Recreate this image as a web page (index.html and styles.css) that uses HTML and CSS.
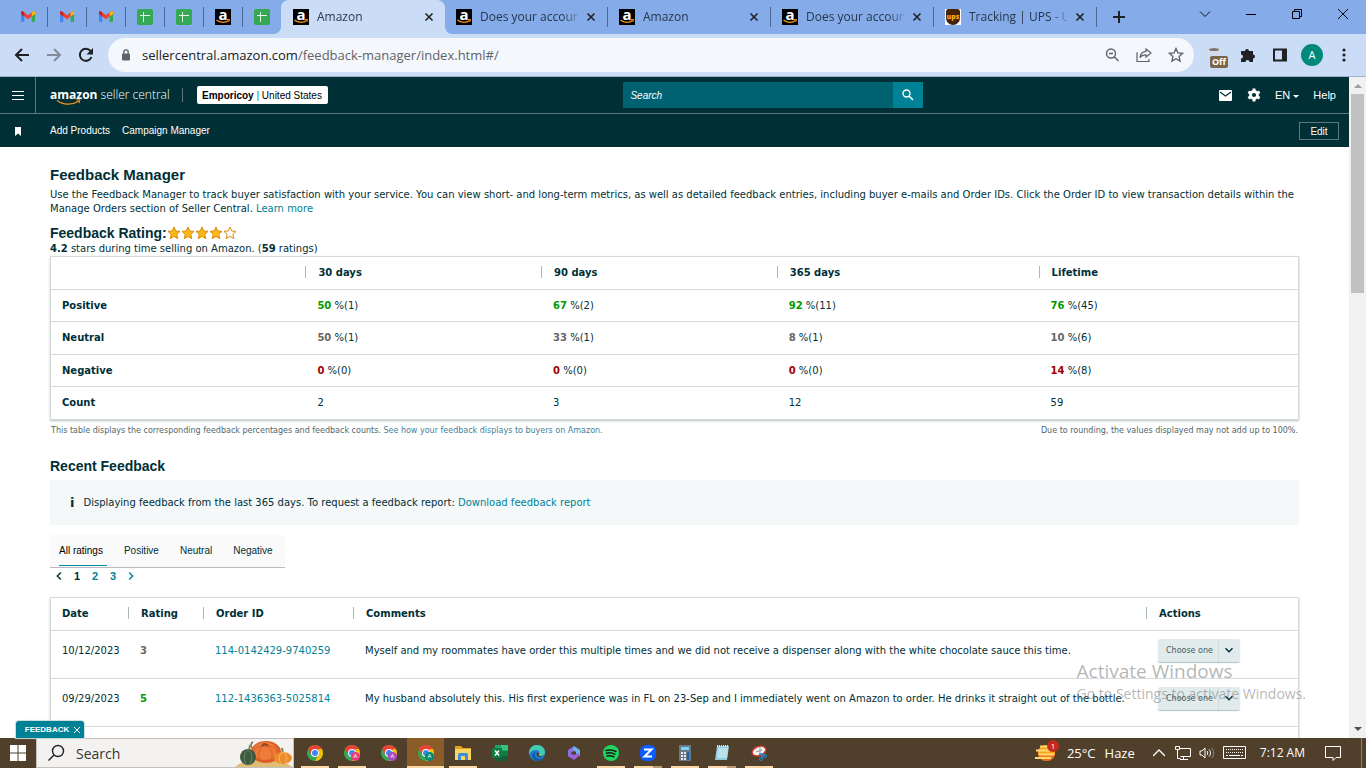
FILE: index.html
```html
<!DOCTYPE html>
<html lang="en">
<head>
    <meta charset="UTF-8">
    <meta name="viewport" content="width=device-width, initial-scale=1.0">
    <title>Amazon</title>
    <link rel="stylesheet" href="styles.css">
</head>
<body>
    <!-- shared icons -->
    <svg class="sprite" aria-hidden="true">
        <symbol id="gmail" viewBox="0 0 16 16">
            <path fill="#4285f4" d="M1 5v7.2c0 .5.3.8.8.8H4.300V6.600z"/>
            <path fill="#34a853" d="M15 5v7.200c0 .5-.3.800-.8.800h-2.500V6.600z"/>
            <path fill="#ea4335" d="M1 3.500C1 2.300 2.400 2 3.300 2.700L8 6.300l4.700-3.600C13.600 2 15 2.300 15 3.500V5L8 10.300 1 5z"/>
            <path fill="#c5221f" d="M1 3.500C1 2.300 2.400 2 3.300 2.700l1 .8v4L1 5z"/>
            <path fill="#fbbc04" d="M15 3.500c0-1.200-1.400-1.500-2.300-.8l-1 .8v4L15 5z"/>
        </symbol>
        <symbol id="sheets" viewBox="0 0 16 16">
            <rect width="16" height="16" rx="2" fill="#34a853"/>
            <path d="M6.500 3v10M3 6.500h10" stroke="#e6f5ea" stroke-width="1" fill="none"/>
        </symbol>
        <symbol id="smile" viewBox="0 0 16 5">
            <path d="M1.500 1C5 4 10.500 4 13.500 1.600" stroke="#f7941d" stroke-width="1.300" fill="none"/>
            <path d="M12 .7l2.600-.2-.8 2.400" stroke="#f7941d" fill="none"/>
        </symbol>
        <symbol id="close" viewBox="0 0 10 10">
            <path d="M1.500 1.500l7 7M8.500 1.500l-7 7" stroke="currentColor" stroke-width="1.600" fill="none"/>
        </symbol>
        <symbol id="star" viewBox="0 0 14 14">
            <path d="M7 1l1.800 4 4.200.400-3.200 2.900 1 4.400L7 10.400l-3.800 2.300 1-4.400L1 5.400 5.200 5z"/>
        </symbol>
        <symbol id="chevron" viewBox="0 0 10 10">
            <path d="M1.500 3.200L5 6.700l3.500-3.500" stroke="currentColor" stroke-width="1.400" fill="none"/>
        </symbol>
        <symbol id="chrome" viewBox="0 0 16 16">
            <circle cx="8" cy="8" r="8" fill="#34a853"/>
            <path fill="#ea4335" d="M1.100 4A8 8 0 0 1 14.900 4L8 8H4z"/>
            <path fill="#ea4335" d="M1.100 4l3.500 6L8 4.400z"/>
            <path fill="#fbbc04" d="M14.900 4A8 8 0 0 1 8 16l3.500-6V4z"/>
            <circle cx="8" cy="8" r="4" fill="#fff"/>
            <circle cx="8" cy="8" r="3" fill="#4285f4"/>
        </symbol>
    </svg>

    <!-- browser tabs -->
    <div class="tab-strip">
        <div class="pinned"><svg><use href="#gmail"/></svg></div>
        <div class="pinned"><svg><use href="#gmail"/></svg></div>
        <div class="pinned"><svg><use href="#gmail"/></svg></div>
        <div class="pinned"><svg><use href="#sheets"/></svg></div>
        <div class="pinned"><svg><use href="#sheets"/></svg></div>
        <div class="pinned"><span class="favicon">a<svg><use href="#smile"/></svg></span></div>
        <div class="pinned last"><svg><use href="#sheets"/></svg></div>
        <div class="tab active">
            <span class="favicon">a<svg><use href="#smile"/></svg></span>
            <span class="tab-title">Amazon</span>
            <button class="tab-close" aria-label="Close tab"><svg><use href="#close"/></svg></button>
        </div>
        <div class="tab">
            <span class="favicon">a<svg><use href="#smile"/></svg></span>
            <span class="tab-title">Does your accoun</span>
            <button class="tab-close" aria-label="Close tab"><svg><use href="#close"/></svg></button>
        </div>
        <div class="tab">
            <span class="favicon">a<svg><use href="#smile"/></svg></span>
            <span class="tab-title">Amazon</span>
            <button class="tab-close" aria-label="Close tab"><svg><use href="#close"/></svg></button>
        </div>
        <div class="tab">
            <span class="favicon">a<svg><use href="#smile"/></svg></span>
            <span class="tab-title">Does your accoun</span>
            <button class="tab-close" aria-label="Close tab"><svg><use href="#close"/></svg></button>
        </div>
        <div class="tab">
            <span class="favicon ups"><b>ups</b></span>
            <span class="tab-title">Tracking | UPS - U</span>
            <button class="tab-close" aria-label="Close tab"><svg><use href="#close"/></svg></button>
        </div>
        <button class="new-tab" aria-label="New tab"><svg viewBox="0 0 12 12"><path d="M6 0v12M0 6h12" stroke="#202124" stroke-width="2"/></svg></button>
        <div class="window-controls">
            <button aria-label="Search tabs"><svg viewBox="0 0 12 12"><path d="M1 3.500l5 5 5-5" stroke="#111" fill="none"/></svg></button>
            <button aria-label="Minimize"><svg viewBox="0 0 12 12"><path d="M1 6.500h10" stroke="#000"/></svg></button>
            <button aria-label="Restore"><svg viewBox="0 0 12 12"><path d="M1.500 3.500h7v7h-7zM3.500 3.500v-2h7v7h-2" stroke="#000" fill="none"/></svg></button>
            <button aria-label="Close"><svg viewBox="0 0 12 12"><path d="M1 1l10 10M11 1L1 11" stroke="#000" fill="none"/></svg></button>
        </div>
    </div>

    <!-- address bar -->
    <div class="toolbar">
        <button class="nav-button" aria-label="Back"><svg viewBox="0 0 16 16"><path d="M15 8H2M8 2L2 8l6 6" stroke="#202124" stroke-width="2" fill="none"/></svg></button>
        <button class="nav-button" aria-label="Forward"><svg viewBox="0 0 16 16"><path d="M1 8h13M8 2l6 6-6 6" stroke="#838b99" stroke-width="2" fill="none"/></svg></button>
        <button class="nav-button" aria-label="Reload"><svg viewBox="0 0 16 16"><path d="M13.500 10A6 6 0 1 1 12.500 4" stroke="#202124" stroke-width="2" fill="none"/><path d="M15 1v6.500H8.500z" fill="#202124"/></svg></button>
        <div class="address">
            <svg class="lock" viewBox="0 0 10 12"><rect x="1" y="4.500" width="8" height="7" rx="1" fill="#5f6368"/><path d="M2.800 5V3a2.200 2.200 0 0 1 4.400 0v2" stroke="#5f6368" stroke-width="1.300" fill="none"/></svg>
            <span class="url"><span class="host">sellercentral.amazon.com</span>/feedback-manager/index.html#/</span>
            <svg class="address-icon" viewBox="0 0 16 16"><circle cx="7" cy="6.500" r="4.500" stroke="#5f6368" stroke-width="1.400" fill="none"/><path d="M10.300 9.800L14.500 14M5 6.500h4" stroke="#5f6368" stroke-width="1.400"/></svg>
            <svg class="address-icon" viewBox="0 0 16 16"><path d="M2 6H1v8.500h12V12" stroke="#5f6368" stroke-width="1.200" fill="none"/><path d="M10 2l5 4-5 4V7.800C7 7.800 5 9 4 10.800 4.300 7.500 6 4.800 10 4.400z" stroke="#5f6368" stroke-width="1.200" fill="none"/></svg>
            <svg class="address-icon" viewBox="0 0 16 16"><path d="M8 1.500l1.900 4.300 4.700.500-3.500 3.200 1 4.600L8 11.700l-4.100 2.400 1-4.600L1.400 6.300l4.700-.5z" stroke="#5f6368" stroke-width="1.300" fill="none"/></svg>
        </div>
        <div class="extensions">
            <span class="extension-off">
                <svg viewBox="0 0 16 16"><ellipse cx="8" cy="4" rx="7" ry="3" fill="#d9dbde"/><ellipse cx="8" cy="3.500" rx="5" ry="1.600" fill="#777"/><path d="M2 6v5M13 6v4" stroke="#d9dbde" stroke-width="2"/></svg>
                <b>Off</b>
            </span>
            <svg class="extension-icon" viewBox="0 0 16 16"><path fill="#202124" d="M1 4h4a2 2 0 1 1 4 0h4v3.500a2 2 0 1 1 0 4V15H9.500a2 2 0 0 0-4 0H1v-3.500a2 2 0 0 0 0-4z"/></svg>
            <svg class="extension-icon" viewBox="0 0 16 16"><path d="M2 2.500h12v11H2z" stroke="#202124" stroke-width="2" fill="none"/><path d="M10 2h5v12h-5z" fill="#202124"/></svg>
            <span class="avatar">A</span>
            <svg class="dots" viewBox="0 0 4 16"><circle cx="2" cy="3" r="1.600"/><circle cx="2" cy="8" r="1.600"/><circle cx="2" cy="13" r="1.600"/></svg>
        </div>
    </div>

    <div class="viewport">
        <div class="page">
            <header>
                <div class="header-top">
                    <button class="menu-button" aria-label="Menu"><svg viewBox="0 0 12 10"><path d="M0 1.500h12M0 5.500h12M0 9.500h12" stroke="#fff"/></svg></button>
                    <a class="logo" href="#"><b>amazon</b> seller central<svg viewBox="0 0 26 7"><path d="M1 1.500c6 4.500 15 5 22 .500" stroke="#f7941d" stroke-width="1.400" fill="none"/><path d="M20 1l4-.3-1 3.600" stroke="#f7941d" fill="none"/></svg></a>
                    <button class="store"><span><b>Emporicoy</b> <i>|</i> United States</span></button>
                    <form class="search">
                        <input type="text" placeholder="Search" aria-label="Search">
                        <button type="button" aria-label="Go"><svg viewBox="0 0 12 12"><circle cx="4.500" cy="4.500" r="3.500" stroke="#fff" stroke-width="1.400" fill="none"/><path d="M7 7l4 4" stroke="#fff" stroke-width="1.600"/></svg></button>
                    </form>
                    <nav class="header-links">
                        <a href="#" aria-label="Messages"><svg viewBox="0 0 14 14"><rect x="0" y="2" width="13" height="11" rx="1" fill="#fff"/><path d="M1 4l5.500 4L12 4" stroke="#002f36" stroke-width="1.200" fill="none"/></svg></a>
                        <a href="#" aria-label="Settings"><svg viewBox="0 0 14 14"><circle cx="7" cy="7" r="3.500" stroke="#fff" stroke-width="2.800" fill="none"/><path d="M7 .5v2.500M7 11v2.500M1.400 3.800l2 1.200M10.600 9l2 1.200M1.400 10.200l2-1.200M10.600 5l2-1.200" stroke="#fff" stroke-width="3"/></svg></a>
                        <a href="#">EN <span class="caret"></span></a>
                        <a href="#">Help</a>
                    </nav>
                </div>
                <nav class="favorites">
                    <svg class="bookmark" viewBox="0 0 6 9"><path d="M0 0h6v9L3 6.500 0 9z" fill="#fff"/></svg>
                    <a href="#">Add Products</a>
                    <a href="#">Campaign Manager</a>
                    <button class="edit">Edit</button>
                </nav>
            </header>

            <main>
                <h1>Feedback Manager</h1>
                <p>Use the Feedback Manager to track buyer satisfaction with your service. You can view short- and long-term metrics, as well as detailed feedback entries, including buyer e-mails and Order IDs. Click the Order ID to view transaction details within the Manage Orders section of Seller Central. <a href="#">Learn more</a></p>

                <div class="rating">
                    <h2>Feedback Rating:</h2>
                    <span class="stars">
                        <svg><use href="#star"/></svg><svg><use href="#star"/></svg><svg><use href="#star"/></svg><svg><use href="#star"/></svg><svg class="empty"><use href="#star"/></svg>
                    </span>
                </div>
                <p><b>4.2</b> stars during time selling on Amazon. (<b>59</b> ratings)</p>

                <table class="summary">
                    <thead>
                        <tr><td></td><th>30 days</th><th>90 days</th><th>365 days</th><th>Lifetime</th></tr>
                    </thead>
                    <tbody>
                        <tr class="positive"><th>Positive</th><td><b>50</b> %(1)</td><td><b>67</b> %(2)</td><td><b>92</b> %(11)</td><td><b>76</b> %(45)</td></tr>
                        <tr class="neutral"><th>Neutral</th><td><b>50</b> %(1)</td><td><b>33</b> %(1)</td><td><b>8</b> %(1)</td><td><b>10</b> %(6)</td></tr>
                        <tr class="negative"><th>Negative</th><td><b>0</b> %(0)</td><td><b>0</b> %(0)</td><td><b>0</b> %(0)</td><td><b>14</b> %(8)</td></tr>
                        <tr><th>Count</th><td>2</td><td>3</td><td>12</td><td>59</td></tr>
                    </tbody>
                </table>
                <div class="notes">
                    <span>This table displays the corresponding feedback percentages and feedback counts. <a href="#">See how your feedback displays to buyers on Amazon.</a></span>
                    <span>Due to rounding, the values displayed may not add up to 100%.</span>
                </div>

                <h2 class="recent-title">Recent Feedback</h2>
                <div class="info">
                    <b class="info-icon">i</b>
                    <span>Displaying feedback from the last 365 days. To request a feedback report: <a href="#">Download feedback report</a></span>
                </div>

                <div class="filters">
                    <button class="selected">All ratings</button>
                    <button>Positive</button>
                    <button>Neutral</button>
                    <button>Negative</button>
                </div>
                <nav class="pages">
                    <a class="current" href="#" aria-label="Previous"><svg class="left"><use href="#chevron"/></svg></a>
                    <a class="current" href="#">1</a>
                    <a href="#">2</a>
                    <a href="#">3</a>
                    <a href="#" aria-label="Next"><svg class="right"><use href="#chevron"/></svg></a>
                </nav>

                <table class="feedback">
                    <thead>
                        <tr><th class="date">Date</th><th class="score">Rating</th><th class="order">Order ID</th><th>Comments</th><th class="actions">Actions</th></tr>
                    </thead>
                    <tbody>
                        <tr class="neutral">
                            <td>10/12/2023</td><td><b>3</b></td><td><a href="#">114-0142429-9740259</a></td>
                            <td>Myself and my roommates have order this multiple times and we did not receive a dispenser along with the white chocolate sauce this time.</td>
                            <td><span class="choose"><select aria-label="Action"><option>Choose one</option></select><svg><use href="#chevron"/></svg></span></td>
                        </tr>
                        <tr class="positive">
                            <td>09/29/2023</td><td><b>5</b></td><td><a href="#">112-1436363-5025814</a></td>
                            <td>My husband absolutely this. His first experience was in FL on 23-Sep and I immediately went on Amazon to order. He drinks it straight out of the bottle.</td>
                            <td><span class="choose"><select aria-label="Action"><option>Choose one</option></select><svg><use href="#chevron"/></svg></span></td>
                        </tr>
                        <tr><td></td><td></td><td></td><td></td><td></td></tr>
                    </tbody>
                </table>
            </main>
        </div>
        <div class="scrollbar"><i class="arrow up"></i><div class="thumb"></div><i class="arrow down"></i></div>
        <button class="feedback-tab">FEEDBACK <svg viewBox="0 0 8 8"><path d="M1 1l6 6M7 1L1 7" stroke="#fff" fill="none"/></svg></button>
        <div class="watermark"><div class="watermark-title">Activate Windows</div>Go to Settings to activate Windows.</div>
    </div>

    <!-- windows taskbar -->
    <div class="taskbar">
        <button class="start" aria-label="Start"><svg viewBox="0 0 16 16"><path fill="#fff" d="M0 0h7.500v7.500H0zM8.500 0H16v7.500H8.500zM0 8.500h7.500V16H0zM8.500 8.500H16V16H8.500z"/></svg></button>
        <div class="task-search">
            <svg class="glass" viewBox="0 0 18 18"><circle cx="11" cy="7" r="5.500" stroke="#222" stroke-width="1.400" fill="none"/><path d="M7 11l-5.500 5.500" stroke="#222" stroke-width="1.400"/></svg>
            <input type="text" placeholder="Search" aria-label="Search Windows">
            <svg class="pumpkins" viewBox="0 0 58 28">
                <path d="M0 28c8-7 20-8 32-7s20 3 26 7z" fill="#e0bd74"/>
                <path d="M17 9c-2-2-1-5 1-6" stroke="#75633c" stroke-width="1.500" fill="none"/>
                <ellipse cx="31" cy="13" rx="15" ry="11" fill="#dd5f28"/>
                <ellipse cx="30" cy="12" rx="12" ry="9" fill="#ee7b38"/>
                <path d="M30 7c-6 1-8 7-5 15M30 7c6 1 9 7 6 15M30 7c-9-1-13 4-11 12M30 7c9-1 14 4 12 12" stroke="#d4602c" fill="none"/>
                <path d="M27 7c2-3 5-2 6 0" stroke="#8a4a22" stroke-width="2" fill="none"/>
                <path d="M14 11l1-5" stroke="#8b9a54" stroke-width="2"/>
                <ellipse cx="13" cy="18" rx="8" ry="8" fill="#3f5a40"/>
                <path d="M13 11c-4 2-5 8-2 14M13 11c4 2 5 8 2 14" stroke="#6b8662" fill="none"/>
                <path d="M48 15l-1-6" stroke="#708448" stroke-width="2"/>
                <ellipse cx="48" cy="19" rx="9" ry="6" fill="#ee8c2b"/>
                <path d="M48 13c-4 2-5 7-2 12M48 13c4 2 5 7 2 12" stroke="#ffb75c" fill="none"/>
            </svg>
        </div>
        <div class="apps">
            <button class="app open" aria-label="Chrome"><svg><use href="#chrome"/></svg></button>
            <button class="app open" aria-label="Chrome profile 1"><svg><use href="#chrome"/></svg><i class="badge pink">A</i></button>
            <button class="app" aria-label="Chrome profile 2"><svg><use href="#chrome"/></svg><i class="badge purple">A</i></button>
            <button class="app current" aria-label="Chrome profile 3"><svg><use href="#chrome"/></svg><i class="badge teal">A</i></button>
            <button class="app open" aria-label="Files"><svg viewBox="0 0 16 16"><path d="M0 1h6l2 2h8v4H0z" fill="#e3a012"/><path d="M0 4h16v11H0z" fill="#fcd462"/><path d="M3 15V9.500C3 8.500 4 8 5 8h6c1 0 2 .5 2 1.500V15h-3v-4H6v4z" fill="#3c8fdd"/></svg></button>
            <button class="app" aria-label="Excel"><svg viewBox="0 0 16 16"><path d="M3 0h13v16H3z" fill="#21a366"/><path d="M9 0h7v5H9z" fill="#33c481"/><path d="M3 8h13v8H3z" fill="#185c37"/><path d="M9 6h7v5H9z" fill="#107c41"/><path d="M0 3h10v10H0z" fill="#107c41"/><path d="M3 5.500l4 5M7 5.500l-4 5" stroke="#fff" stroke-width="1.500"/></svg></button>
            <button class="app" aria-label="Edge"><svg viewBox="0 0 16 16"><circle cx="8" cy="8" r="8" fill="#1b7fd4"/><path d="M0 7C1 2 4 0 8 0c5 0 8 3.500 8 7 0 3-2 4-5 4-2 0-2-1-1-2 1-2 0-4-3-4-4 0-6 2-7 5z" fill="#45cbb0"/><path d="M6 8c-1 4 2 7 8 5-2 3-5 3-6 3-4-1-6-5-4-8 1-1 2-1 3-1z" fill="#0f5ba8"/><path d="M8.500 7.500c1.500 0 2 .8 1.500 1.700-.8 1.300.5 2 2.500 1.800 1.200 0 2-.3 2.800-.9-.8 1.900-5.300 2.400-7 .9-1.400-1.300-1-3.500.2-3.500z" fill="#4f3f2b"/></svg></button>
            <button class="app" aria-label="Microsoft 365"><svg viewBox="0 0 16 16"><path d="M2 5l6-4v5L5 8v5l-3-2z" fill="#8a6fe0"/><path d="M8 1l6 4v6l-4-1V7L7 5z" fill="#69b5f0"/><path d="M14 10l-6 5-6-4 4-2 2 1 4-2z" fill="#9a64d8"/></svg></button>
            <button class="app open" aria-label="Spotify"><svg viewBox="0 0 16 16"><circle cx="8" cy="8" r="8" fill="#1ed760"/><path d="M3 5.500c3.500-1 7-.7 10 1M3.500 8.300c3-.8 6-.5 8.500 1M4 11c2.500-.6 4.700-.4 7 .8" stroke="#191414" stroke-width="1.500" fill="none" stroke-linecap="round"/></svg></button>
            <button class="app open stacked" aria-label="Zoom"><svg viewBox="0 0 16 16"><rect width="16" height="16" rx="6" fill="#0b5cff"/><path d="M4 4.500h7.500L4.500 11.500H12" stroke="#fff" stroke-width="2" fill="none"/></svg></button>
            <button class="app open" aria-label="Calculator"><svg viewBox="0 0 16 16"><path d="M2 0h12v16H2z" fill="#6b7885"/><path d="M4 2h8v3H4z" fill="#7ad4f5"/><path d="M4 8h5M4 11h5M4 14h5" stroke="#e4eaf0" stroke-width="2" stroke-dasharray="2 1"/><path d="M10 7h2v8h-2z" fill="#1d5fa8"/></svg></button>
            <button class="app open stacked" aria-label="Notepad"><svg viewBox="0 0 16 16"><path d="M3 1h12l-2 14H1z" fill="#8fcbdc"/><path d="M4 3h10l-1 10H3z" fill="#b9e2ec"/><path d="M3 1h12" stroke="#e9e9e9" stroke-width="2" stroke-dasharray="1 1"/></svg></button>
            <button class="app open" aria-label="Snipping Tool"><svg viewBox="0 0 16 16"><ellipse cx="8" cy="6" rx="7" ry="4.500" fill="#f3f3f3" stroke="#d23b36" stroke-width="1.400" transform="rotate(-20 8 6)"/><path d="M9 2v8M5 7l6-2" stroke="#999"/><path d="M8 9l6 1M11 8v5" stroke="#2a86c9" stroke-width="1.500"/><circle cx="10" cy="14" r="1.500" stroke="#2a86c9" fill="none"/><circle cx="14" cy="11" r="1.500" stroke="#2a86c9" fill="none"/></svg></button>
        </div>
        <div class="tray">
            <span class="weather">
                <svg viewBox="0 0 22 20"><path d="M3 13a9 9 0 0 0 17 0z" fill="#f2701d"/><path d="M3 9a9 9 0 0 1 17 0v4H3z" fill="#f6a821"/><path d="M5 4.500h12M1 8.500h16M4 12.500h15M0 16h16" stroke="#ffd970" stroke-width="2"/></svg>
                <i class="alert">1</i>
            </span>
            <span class="temperature">25°C</span>
            <span class="sky">Haze</span>
            <svg class="tray-up" viewBox="0 0 12 12"><path d="M0 9l6-6 6 6" stroke="#fff" stroke-width="1.300" fill="none"/></svg>
            <svg class="tray-net" viewBox="0 0 18 16"><path d="M5.500 3.500h11v8h-10M9.500 11.500v3M6 14.500h8" stroke="#fff" fill="none"/><path d="M1.500 1.500h4v3h-4zM3.500 4.500v9h3" stroke="#fff" fill="none"/></svg>
            <svg class="tray-sound" viewBox="0 0 16 14"><path d="M1 5h2l3-3v10L3 9H1z" stroke="#fff" fill="none"/><path d="M8 5c1 1 1 3 0 4M10 3.500c2 2 2 5 0 7" stroke="#fff" fill="none"/><path d="M12.500 2c3 3 3 7 0 10" stroke="#99907f" fill="none"/></svg>
            <svg class="tray-keys" viewBox="0 0 23 14"><path d="M.5.5h22v12H.5z" stroke="#fff" fill="none"/><path d="M3 3.500h17M3 6.500h17" stroke="#fff" stroke-dasharray="1 1"/><path d="M3 9.500h17" stroke="#fff" stroke-dasharray="2 1 11 1"/></svg>
            <span class="clock">7:12 AM</span>
            <svg class="tray-note" viewBox="0 0 16 16"><path d="M.5 1.500h15v11H11l-3 3v-3H.5z" stroke="#fff" fill="none"/></svg>
        </div>
    </div>
</body>
</html>
```

FILE: styles.css
```css
* {
    box-sizing: border-box;
}

body {
    margin: 0;
    height: 100vh;
    display: flex;
    flex-direction: column;
    overflow: hidden;
    background: #fff;
    color: #002f36;
    font-family: "DejaVu Sans", Verdana, sans-serif;
    font-size: 10px;
    line-height: 14px;
}

button, input, select {
    margin: 0;
    padding: 0;
    border: 0;
    background: none;
    font-family: inherit;
    color: inherit;
}

button {
    display: flex;
    align-items: center;
    justify-content: center;
}

svg {
    display: block;
    flex: none;
}

a {
    color: #008296;
    text-decoration: none;
}

h1, h2, p {
    margin: 0;
}

.sprite {
    display: none;
}

/* tabs */
.tab-strip {
    flex: none;
    display: flex;
    align-items: center;
    height: 34px;
    padding-left: 9px;
    background: #85abe9;
    color: #27364b;
    font-family: "Open Sans", sans-serif;
    font-size: 12px;
}

.pinned {
    width: 39px;
    height: 20px;
    display: flex;
    align-items: center;
    justify-content: center;
    border-right: 1px solid #4c6797;
}

.pinned.last {
    border: 0;
    width: 38px;
}

.pinned > svg {
    width: 16px;
    height: 16px;
}

.favicon {
    flex: none;
    width: 16px;
    height: 16px;
    background: #000;
    color: #fff;
    font: bold 15px/10px "Open Sans", sans-serif;
    text-align: center;
}

.favicon svg {
    width: 16px;
    height: 5px;
}

.ups {
    display: flex;
    align-items: center;
    justify-content: center;
    background: #fff;
}

.ups b {
    width: 14px;
    height: 16px;
    border-radius: 3px 3px 8px 8px;
    background: #47220b;
    color: #f7a81b;
    font-size: 7px;
    line-height: 16px;
}

.tab {
    width: 163px;
    height: 20px;
    display: flex;
    align-items: center;
    gap: 8px;
    padding: 0 11px;
    border-right: 1px solid #4c6797;
}

.tab.active {
    position: relative;
    align-self: flex-end;
    width: 164px;
    height: 34px;
    border: 0;
    border-radius: 8px 8px 0 0;
    background: #cbdcf7;
    padding-left: 12px;
}

/* rounded feet of the open tab */
.tab.active::before,
.tab.active::after {
    content: "";
    position: absolute;
    bottom: 0;
    width: 8px;
    height: 8px;
}

.tab.active::before {
    right: 100%;
    background: radial-gradient(circle at 0 0, transparent 8px, #cbdcf7 8px);
}

.tab.active::after {
    left: 100%;
    background: radial-gradient(circle at 100% 0, transparent 8px, #cbdcf7 8px);
}

.tab-title {
    flex: 1;
    min-width: 0;
    white-space: nowrap;
    line-height: 18px;
    mask-image: linear-gradient(to right, #000 82px, transparent 102px);
}

.tab-close svg {
    width: 10px;
    height: 10px;
    color: #202124;
}

.new-tab {
    width: 44px;
}

.new-tab svg {
    width: 12px;
    height: 12px;
}

.window-controls {
    display: flex;
    margin-left: auto;
    align-self: flex-start;
}

.window-controls button {
    width: 46px;
    height: 28px;
}

.window-controls svg {
    width: 12px;
    height: 12px;
}

/* address bar */
.toolbar {
    flex: none;
    display: flex;
    align-items: center;
    height: 43px;
    padding-left: 6px;
    border-bottom: 1px solid #a2b1ca;
    background: #cbdcf7;
    font-family: "Open Sans", sans-serif;
}

.nav-button {
    width: 32px;
    height: 32px;
}

.nav-button svg {
    width: 16px;
    height: 16px;
}

.address {
    flex: 1;
    display: flex;
    align-items: center;
    height: 34px;
    margin-left: 6px;
    padding: 0 10px 0 13px;
    border-radius: 17px;
    background: #f4f8fd;
}

.lock {
    width: 10px;
    height: 12px;
    margin-right: 11px;
}

.url {
    flex: 1;
    color: #5f6368;
    font-size: 13px;
}

.host {
    color: #202124;
}

.address-icon {
    width: 16px;
    height: 16px;
    margin-left: 16px;
}

.extensions {
    display: flex;
    align-items: center;
    gap: 16px;
    padding: 0 20px 0 12px;
}

.extension-off {
    position: relative;
    width: 18px;
    height: 18px;
}

.extension-off svg {
    width: 16px;
    height: 16px;
}

.extension-off b {
    position: absolute;
    left: 4px;
    top: 10px;
    width: 18px;
    border-radius: 2px;
    background: #7c6546;
    color: #fff;
    font-size: 9px;
    line-height: 12px;
    text-align: center;
}

.extension-icon {
    width: 16px;
    height: 16px;
}

.avatar {
    width: 22px;
    height: 22px;
    margin: 0 3px 0 -3px;
    border-radius: 50%;
    background: #00897b;
    color: #fff;
    font-size: 11px;
    line-height: 22px;
    text-align: center;
}

.dots {
    width: 4px;
    height: 16px;
    fill: #202124;
}

/* seller central header */
.viewport {
    flex: 1;
    min-height: 0;
    display: flex;
    position: relative;
}

.page {
    flex: 1;
    min-width: 0;
    overflow: hidden;
}

header {
    background: #002f36;
    color: #fff;
    font-family: "Liberation Sans", Arial, sans-serif;
    font-size: 11px;
}

header a {
    color: #fff;
}

.header-top {
    display: flex;
    align-items: center;
    height: 37px;
    border-bottom: 1px solid #5d777c;
}

.menu-button {
    width: 36px;
    height: 36px;
    border-right: 1px solid #5d777c;
}

.menu-button svg {
    width: 12px;
    height: 10px;
}

.logo {
    position: relative;
    width: 133px;
    margin-left: 14px;
    border-right: 1px solid #5d777c;
    font-family: "Open Sans", sans-serif;
    font-size: 12px;
    font-weight: 300;
    white-space: nowrap;
}

.logo b {
    font-weight: 700;
}

.logo svg {
    position: absolute;
    left: 6px;
    top: 11px;
    width: 26px;
    height: 7px;
}

.store {
    height: 18px;
    margin-left: 14px;
    padding: 0 6px 0 5px;
    border-radius: 2px;
    background: #fff;
    color: #000;
    font-size: 10px;
    white-space: nowrap;
}

.store i {
    color: #008296;
    font-style: normal;
}

.search {
    display: flex;
    width: 300px;
    height: 26px;
    margin: 0 auto;
}

.search input {
    flex: 1;
    min-width: 0;
    padding: 0 7px;
    background: #006170;
    font-size: 10px;
}

.search input::placeholder {
    color: #fff;
    font-style: italic;
    opacity: 1;
}

.search button {
    width: 30px;
    background: #008296;
}

.search button svg {
    width: 12px;
    height: 12px;
}

.header-links {
    display: flex;
    align-items: center;
    gap: 14px;
    padding-right: 13px;
}

.header-links svg {
    width: 14px;
    height: 14px;
}

.caret {
    display: inline-block;
    border: 3px solid transparent;
    border-top-color: #fff;
    border-bottom: 0;
    vertical-align: middle;
}

.favorites {
    display: flex;
    align-items: center;
    gap: 12px;
    height: 33px;
    padding: 1px 10px 0 15px;
    font-size: 10px;
}

.bookmark {
    width: 6px;
    height: 9px;
    margin-right: 17px;
}

.edit {
    width: 40px;
    height: 18px;
    margin-left: auto;
    border: 1px solid #5d777c;
    font-size: 10px;
}

/* feedback manager */
main {
    padding: 19px 50px 0;
}

h1, h2 {
    font: bold 14px/18px "Liberation Sans", Arial, sans-serif;
}

h1 {
    margin-bottom: 4px;
    font-size: 15px;
}

.rating {
    display: flex;
    align-items: center;
    margin-top: 8px;
}

.stars {
    display: flex;
}

.stars svg {
    width: 14px;
    height: 14px;
    fill: #fdb813;
    stroke: #d98b0b;
}

.stars .empty {
    fill: #fff;
}

table {
    width: 100%;
    table-layout: fixed;
    border: 1px solid #d5dbdb;
    border-spacing: 0;
    box-shadow: 0 1px 2px #b9c0c0;
}

th, td {
    padding: 0 11px;
    text-align: left;
    border-bottom: 1px solid #d5dbdb;
}

thead th, thead td {
    height: 33px;
}

thead tr > * + th {
    padding-left: 13px;
    background: linear-gradient(#aab7b8, #aab7b8) 0 45% / 1px 12px no-repeat;
}

td + td, th + td {
    padding-left: 12px;
}

.summary tbody tr {
    height: 32px;
}

.summary tbody tr:nth-child(2) {
    height: 33px;
}

.summary tbody tr:last-child > * {
    border-bottom: 0;
}

.summary thead td {
    width: 20.4%;
}

.summary thead th:nth-child(2),
.summary thead th:nth-child(3) {
    width: 18.9%;
}

.summary thead th:nth-child(4) {
    width: 21%;
}

.positive b {
    color: #090;
}

.neutral b {
    color: #666;
}

.negative b {
    color: #a00000;
}

.notes {
    display: flex;
    justify-content: space-between;
    padding: 4px 1px 0;
    color: #51666a;
    font-size: 8px;
}

.notes a {
    color: #3f7f99;
}

.recent-title {
    margin: 19px 0 5px;
}

.info {
    display: flex;
    align-items: center;
    gap: 9px;
    height: 45px;
    padding-left: 20px;
    background: #f4f8f9;
}

.info-icon {
    font-size: 13px;
}

.filters {
    display: flex;
    width: max-content;
    height: 33px;
    margin-top: 10px;
    padding: 0 12px 0 9px;
    gap: 21px;
    border-bottom: 1px solid #bbb;
    background: #fafafa;
}

.filters button {
    height: 31px;
    padding-top: 2px;
    border-bottom: 1px solid transparent;
    font: 10px/14px "Liberation Sans", Arial, sans-serif;
}

.filters .selected {
    padding-right: 4px;
    margin-right: -4px;
    border-color: #008eb0;
    color: #000;
}

.pages {
    display: flex;
    align-items: center;
    height: 16px;
    font: bold 11px/16px "Liberation Sans", Arial, sans-serif;
}

.pages a {
    display: flex;
    justify-content: center;
    width: 18px;
}

.pages .current {
    color: #002f36;
}

.pages svg {
    width: 10px;
    height: 16px;
}

.left {
    transform: rotate(90deg);
}

.right {
    transform: rotate(-90deg);
}

.feedback {
    margin-top: 13px;
}

.feedback td {
    height: 48px;
    padding-bottom: 8px;
}

.date {
    width: 77px;
}

.score {
    width: 75px;
}

.order {
    width: 150px;
}

.actions {
    width: 152px;
}

.choose {
    position: relative;
    display: block;
    width: 82px;
}

.choose select {
    display: block;
    width: 100%;
    height: 23px;
    padding-left: 8px;
    appearance: none;
    background: linear-gradient(to right, #e1ebec 60px, #d0dbdc 60px, #d0dbdc 61px, #e1ebec 61px);
    border-radius: 2px;
    box-shadow: 0 1px 1px #b5bfc0;
    color: #435b60;
    font-size: 8px;
}

.choose svg {
    position: absolute;
    right: 6px;
    top: 6px;
    width: 10px;
    height: 10px;
}

.scrollbar {
    flex: none;
    width: 17px;
    display: flex;
    flex-direction: column;
    align-items: center;
    background: #f1f1f1;
}

.thumb {
    width: 13px;
    height: 199px;
    margin-bottom: auto;
    background: #c1c1c1;
}

.arrow {
    border: 4px solid transparent;
}

.up {
    margin: 3px 0 6px;
    border-bottom-color: #a0a0a0;
}

.down {
    margin-bottom: 3px;
    border-top-color: #505050;
}

.feedback-tab {
    position: absolute;
    left: 16px;
    bottom: 0;
    gap: 4px;
    width: 68px;
    height: 17px;
    padding-left: 6px;
    border-radius: 3px 3px 0 0;
    background: #008296;
    color: #fff;
    font: bold 8px/17px "Liberation Sans", Arial, sans-serif;
    box-shadow: 0 0 1px 1px #cdd9da;
}

.feedback-tab svg {
    width: 8px;
    height: 8px;
}

.watermark {
    position: absolute;
    right: 60px;
    bottom: 34px;
    color: rgba(120, 120, 120, .55);
    font: 14px/21px "Open Sans", sans-serif;
    pointer-events: none;
}

.watermark-title {
    font-size: 19px;
    line-height: 24px;
}

/* taskbar */
.taskbar {
    flex: none;
    display: flex;
    height: 30px;
    background: #4f3f2b;
    color: #fff;
    font-family: "Open Sans", sans-serif;
}

.start {
    width: 36px;
}

.start svg {
    width: 16px;
    height: 16px;
}

.task-search {
    display: flex;
    align-items: center;
    width: 258px;
    border: 1px solid #c4c1bd;
    background: #f3f2f1;
}

.glass {
    width: 18px;
    height: 18px;
    margin: 0 11px 0 10px;
}

.task-search input {
    flex: 1;
    min-width: 0;
    font-size: 14px;
}

.task-search input::placeholder {
    color: #333;
    opacity: 1;
}

.pumpkins {
    width: 58px;
    height: 28px;
}

.apps {
    display: flex;
    padding-left: 2px;
}

.app {
    position: relative;
    width: 37px;
    height: 30px;
}

.app svg {
    width: 16px;
    height: 16px;
}

.open {
    background: linear-gradient(#fbd7a8, #fbd7a8) center bottom / 28px 2px no-repeat;
}

.stacked {
    background: linear-gradient(to right, #fbd7a8 19px, #b99a76 19px) center bottom / 28px 2px no-repeat;
}

.app.current {
    background: #8a5c28;
    box-shadow: inset 0 -2px #fbd7a8;
}

.badge {
    position: absolute;
    left: 18px;
    top: 14px;
    width: 9px;
    height: 9px;
    border-radius: 50%;
    color: #fff;
    font: 6px/9px "Open Sans", sans-serif;
    text-align: center;
}

.pink {
    background: #ec407a;
}

.purple {
    background: #ab47bc;
}

.teal {
    background: #00897b;
}

.tray {
    display: flex;
    align-items: center;
    margin-left: auto;
    margin-right: 4px;
    padding-right: 20px;
    border-right: 1px solid #8f8474;
    font-size: 13px;
    white-space: nowrap;
}

.weather {
    position: relative;
    width: 24px;
    height: 22px;
}

.weather svg {
    width: 22px;
    height: 20px;
}

.alert {
    position: absolute;
    right: 0;
    top: -2px;
    width: 12px;
    height: 12px;
    border-radius: 50%;
    background: #c42b1c;
    font: 8px/12px "Open Sans", sans-serif;
    text-align: center;
}

.temperature {
    margin-left: 8px;
}

.sky {
    margin-left: 9px;
}

.tray-up {
    width: 12px;
    height: 12px;
    margin-left: 18px;
}

.tray-net {
    width: 18px;
    height: 16px;
    margin-left: 9px;
}

.tray-sound {
    width: 16px;
    height: 14px;
    margin-left: 7px;
}

.tray-keys {
    width: 23px;
    height: 14px;
    margin-left: 8px;
}

.clock {
    margin-left: 14px;
    font-size: 12px;
}

.tray-note {
    width: 16px;
    height: 16px;
    margin-left: 20px;
}
```
